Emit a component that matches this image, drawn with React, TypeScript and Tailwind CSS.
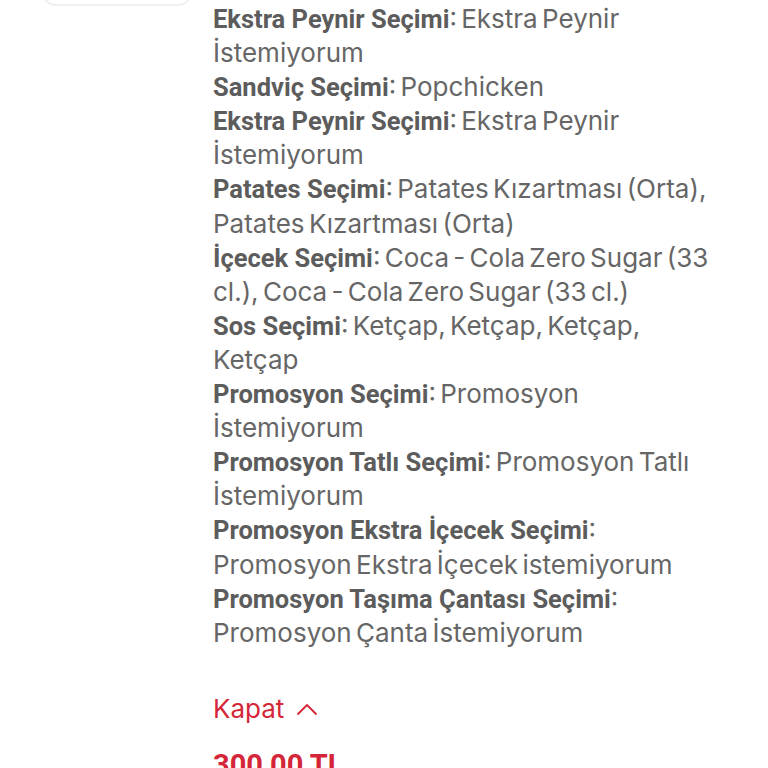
import React from "react";

const items: [string, string][] = [
  ["Ekstra Peynir Seçimi", "Ekstra Peynir İstemiyorum"],
  ["Sandviç Seçimi", "Popchicken"],
  ["Ekstra Peynir Seçimi", "Ekstra Peynir İstemiyorum"],
  ["Patates Seçimi", "Patates Kızartması (Orta), Patates Kızartması (Orta)"],
  ["İçecek Seçimi", "Coca - Cola Zero Sugar (33 cl.), Coca - Cola Zero Sugar (33 cl.)"],
  ["Sos Seçimi", "Ketçap, Ketçap, Ketçap, Ketçap"],
  ["Promosyon Seçimi", "Promosyon İstemiyorum"],
  ["Promosyon Tatlı Seçimi", "Promosyon Tatlı İstemiyorum"],
  ["Promosyon Ekstra İçecek Seçimi", "Promosyon Ekstra İçecek istemiyorum"],
  ["Promosyon Taşıma Çantası Seçimi", "Promosyon Çanta İstemiyorum"],
];

export default function App() {
  return (
    <div className="w-[768px] h-[768px] overflow-hidden bg-white flex">
      <div className="w-[213px] shrink-0 pl-[42px]">
        <div className="w-[150px] h-[106px] -mt-[100px] rounded-[14px] border-2 border-[#f0f0f0] bg-white" />
      </div>
      <div className="w-[505px] pt-[2px]">
        <div
          className="text-[26px] leading-[34.1px] text-[#666666] [word-spacing:-3px]"
          style={{ fontFamily: "Inter, 'Open Sans', sans-serif" }}
        >
          {items.map(([k, v], i) => (
            <div key={i}>
              <span
                className="font-bold text-[25.5px] text-[#5c5c5c] [word-spacing:0px]"
                style={{ fontFamily: "Roboto, sans-serif" }}
              >
                {k}
              </span>
              <span>: {v}</span>
            </div>
          ))}
        </div>
        <div
          className="mt-[42px] flex items-center gap-[12px] text-[26px] leading-[34px] text-[#d42638]"
          style={{ fontFamily: "Inter, sans-serif" }}
        >
          <span>Kapat</span>
          <svg width="22" height="14" viewBox="0 0 22 14" fill="none" stroke="#d42638" strokeWidth="1.8" strokeLinecap="round" strokeLinejoin="round">
            <path d="M2 12 L11 3 L20 12" />
          </svg>
        </div>
        <div
          className="mt-[22px] text-[29px] leading-[34px] font-bold text-[#d42638]"
          style={{ fontFamily: "Roboto, sans-serif" }}
        >
          300,00 TL
        </div>
      </div>
    </div>
  );
}
